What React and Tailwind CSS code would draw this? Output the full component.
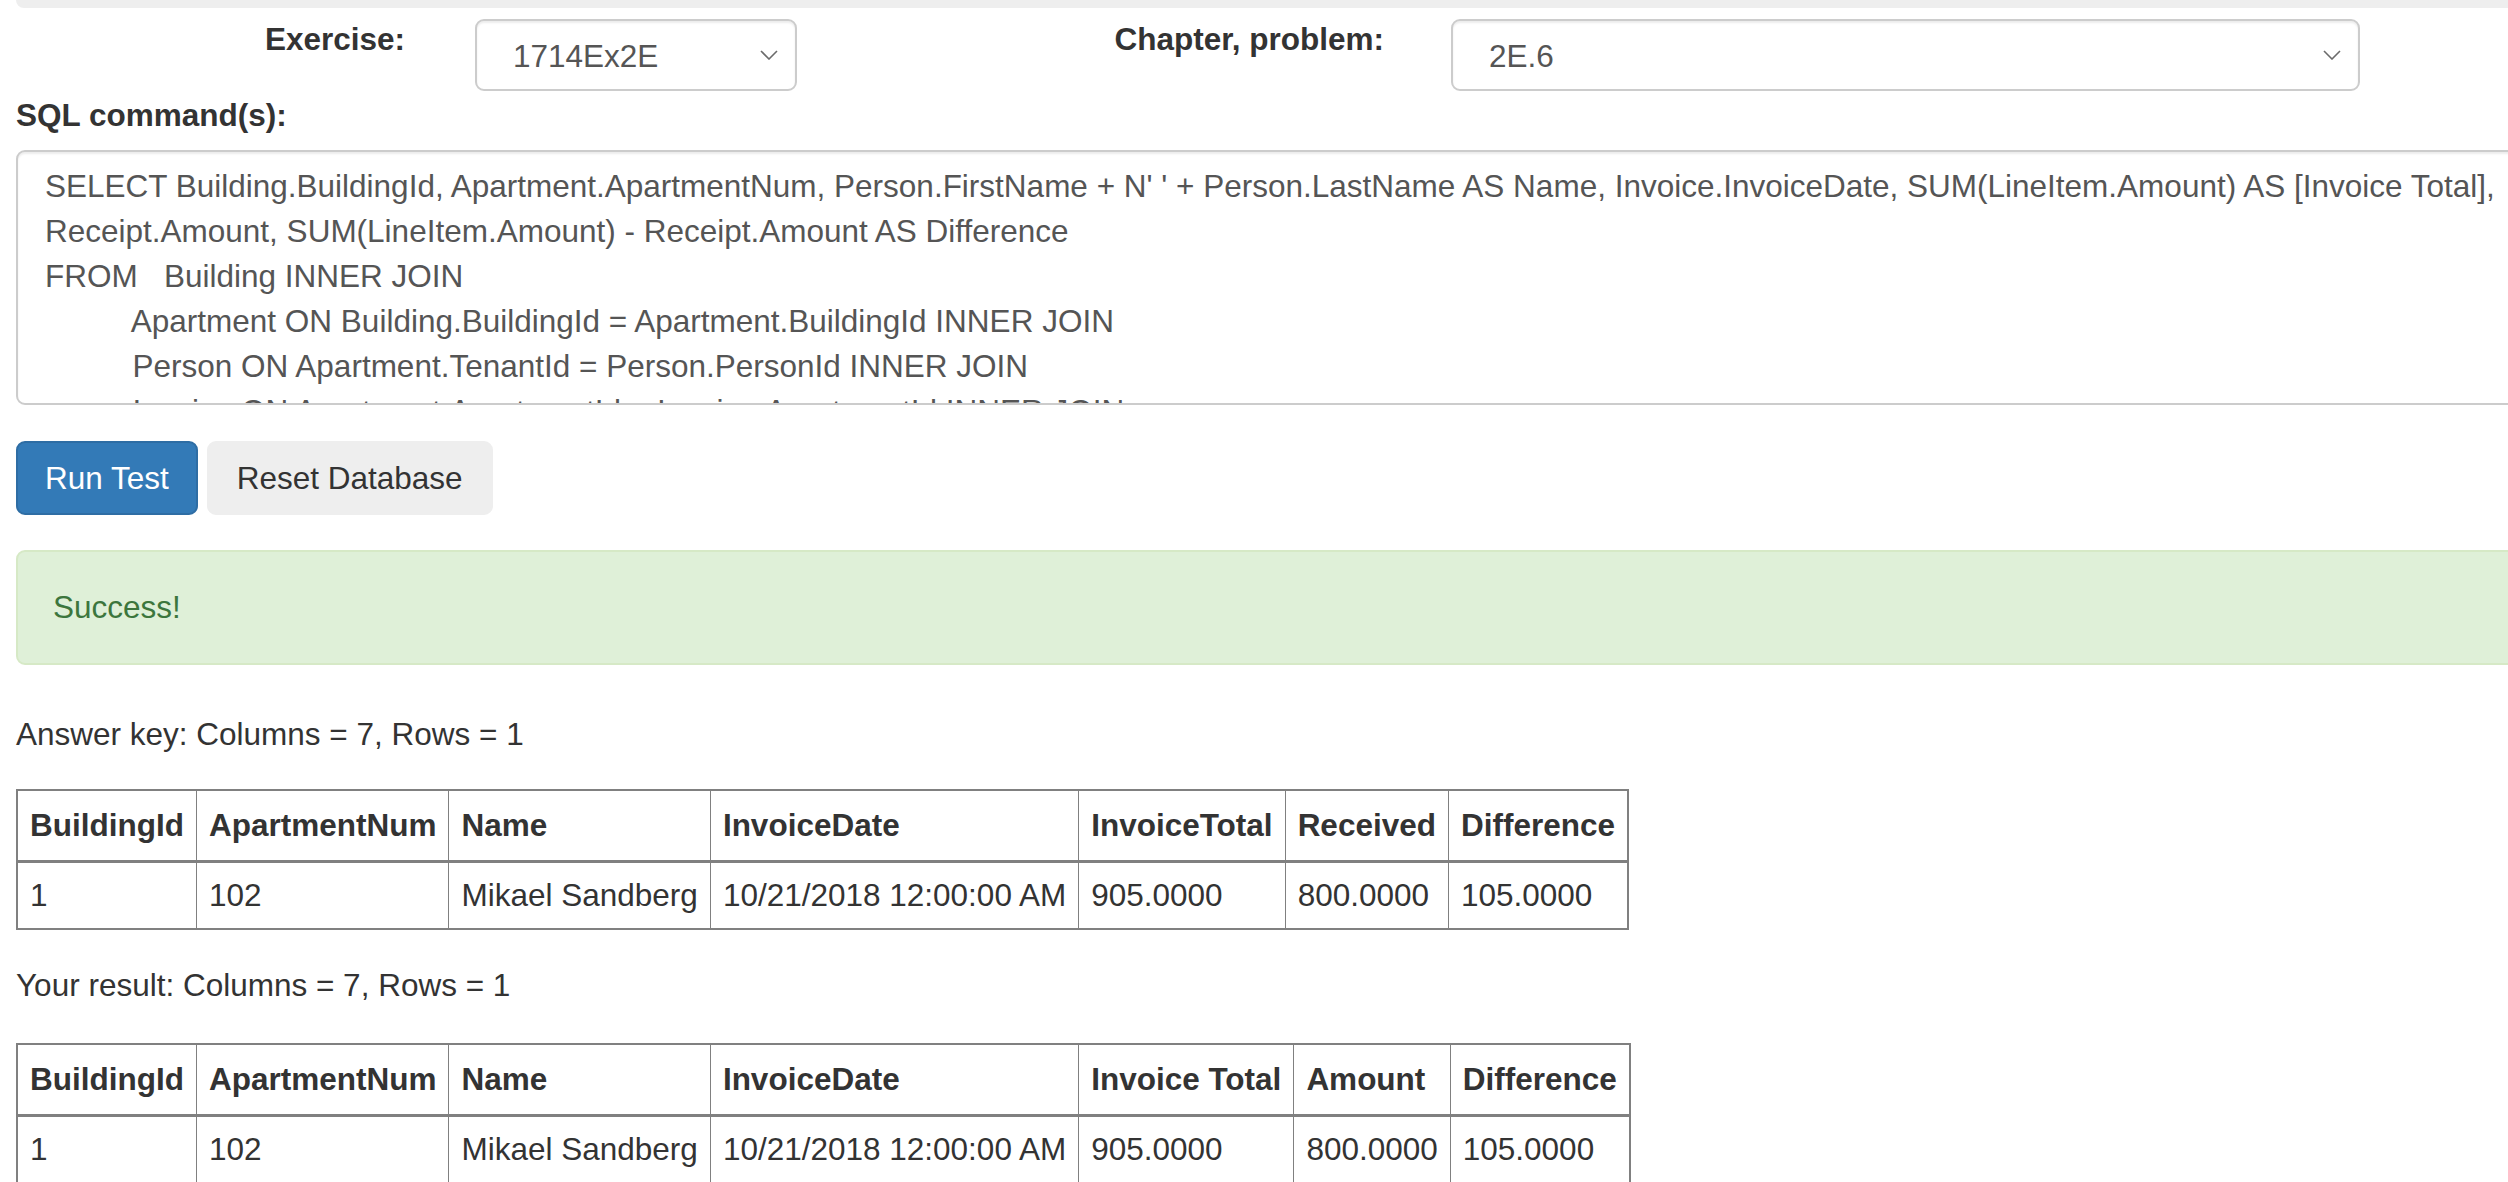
import React from 'react'

const sqlLines = [
  "SELECT Building.BuildingId, Apartment.ApartmentNum, Person.FirstName + N' ' + Person.LastName AS Name, Invoice.InvoiceDate, SUM(LineItem.Amount) AS [Invoice Total],",
  'Receipt.Amount, SUM(LineItem.Amount) - Receipt.Amount AS Difference',
  'FROM   Building INNER JOIN',
  '          Apartment ON Building.BuildingId = Apartment.BuildingId INNER JOIN',
  '          Person ON Apartment.TenantId = Person.PersonId INNER JOIN',
  '          Invoice ON Apartment.ApartmentId = Invoice.ApartmentId INNER JOIN',
  '          LineItem ON Invoice.InvoiceId = LineItem.InvoiceId INNER JOIN',
]

const answerCols = ['BuildingId', 'ApartmentNum', 'Name', 'InvoiceDate', 'InvoiceTotal', 'Received', 'Difference']
const resultCols = ['BuildingId', 'ApartmentNum', 'Name', 'InvoiceDate', 'Invoice Total', 'Amount', 'Difference']
const row = ['1', '102', 'Mikael Sandberg', '10/21/2018 12:00:00 AM', '905.0000', '800.0000', '105.0000']

function Chevron() {
  return (
    <svg width="18" height="10" viewBox="0 0 18 10" className="shrink-0">
      <polyline points="1,1 9,9 17,1" fill="none" stroke="#6b6b6b" strokeWidth="1.6" />
    </svg>
  )
}

function Select({ value, className }) {
  return (
    <div
      className={`flex h-[72px] items-center justify-between rounded-[9px] border-2 border-[#ccc] bg-white pl-[36px] pr-[17px] text-[#555] shadow-[inset_0_2px_2px_rgba(0,0,0,0.075)] ${className}`}
    >
      <span className="pt-[2px]">{value}</span>
      <Chevron />
    </div>
  )
}

function ResultTable({ cols }) {
  return (
    <table className="border-collapse border-2 border-[#808080]">
      <thead>
        <tr>
          {cols.map((c) => (
            <th key={c} className="border border-b-[3px] border-[#808080] px-[12px] py-[12px] text-left font-bold">
              {c}
            </th>
          ))}
        </tr>
      </thead>
      <tbody>
        <tr>
          {row.map((v, i) => (
            <td key={i} className="whitespace-nowrap border border-[#808080] px-[12px] py-[10px]">
              {v}
            </td>
          ))}
        </tr>
      </tbody>
    </table>
  )
}

export default function App() {
  return (
    <div className="h-[1182px] w-[2508px] overflow-hidden bg-white font-['Liberation_Sans',Arial,sans-serif] text-[31.5px] leading-[45px] text-[#333]">
      <div className="w-[2760px] px-[16px]">
        <div className="h-[8px] rounded-b-[9px] bg-[#eeeeee]" />

        {/* exercise / chapter pickers */}
        <div className="flex items-start pt-[9px]">
          <label className="w-[389px] text-right font-bold">Exercise:</label>
          <Select value="1714Ex2E" className="ml-[70px] mt-[2px] w-[322px]" />
          <label className="w-[587px] text-right font-bold">Chapter, problem:</label>
          <Select value="2E.6" className="ml-[67px] mt-[2px] w-[909px]" />
        </div>

        <div className="mt-[2px] font-bold">SQL command(s):</div>
        <div className="mt-[12px] h-[255px] overflow-hidden whitespace-pre rounded-[9px] border-2 border-[#ccc] px-[27px] pt-[12px] text-[#555] shadow-[inset_0_2px_2px_rgba(0,0,0,0.075)]">
          {sqlLines.join('\n')}
        </div>

        <div className="mt-[36px] flex gap-[9px]">
          <button className="h-[74px] rounded-[9px] border-2 border-[#2e6da4] bg-[#337ab7] px-[27px] text-white">
            Run Test
          </button>
          <button className="h-[74px] rounded-[9px] border-2 border-[#eeeeee] bg-[#eeeeee] px-[28px] text-[#333]">
            Reset Database
          </button>
        </div>

        <div className="mt-[35px] rounded-[9px] border-2 border-[#d6e9c6] bg-[#dff0d8] px-[35px] py-[33px] text-[#3c763d]">
          Success!
        </div>

        <div className="mt-[47px]">Answer key: Columns = 7, Rows = 1</div>
        <div className="mt-[32px]">
          <ResultTable cols={answerCols} />
        </div>

        <div className="mt-[33px]">Your result: Columns = 7, Rows = 1</div>
        <div className="mt-[35px]">
          <ResultTable cols={resultCols} />
        </div>
      </div>
    </div>
  )
}
